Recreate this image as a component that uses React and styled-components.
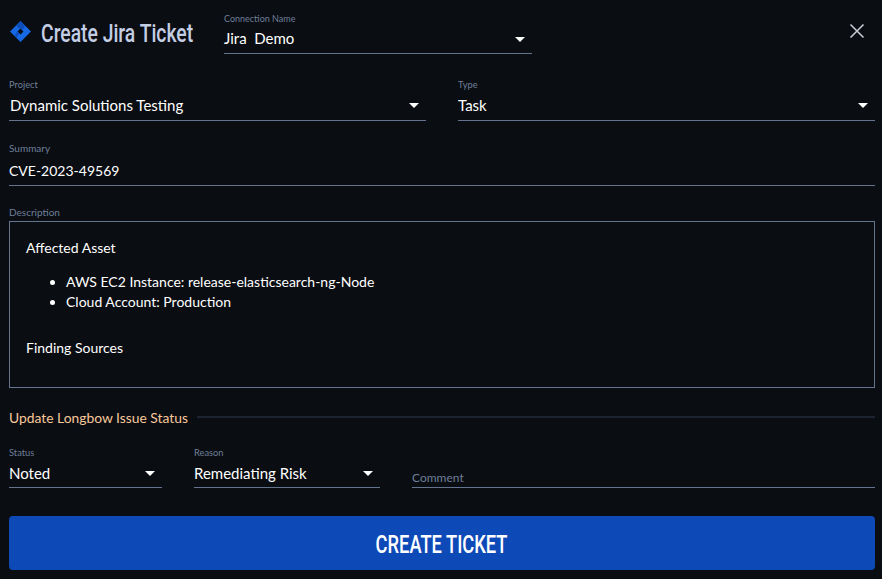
import React from "react";
import styled, { createGlobalStyle } from "styled-components";

const Global = createGlobalStyle`
  html, body { margin: 0; padding: 0; background: #0a0d12; }
  body { font-family: Lato, "Liberation Sans", sans-serif; color: #fff; }
  * { box-sizing: border-box; }
`;

const Page = styled.div`
  width: 882px;
  height: 579px;
  padding: 13px 7px 0 9px;
  background: #0a0d12;
  display: flex;
  flex-direction: column;
  overflow: hidden;
`;

const Header = styled.header`
  display: flex;
  align-items: flex-start;
  height: 41px;
`;

const TitleBlock = styled.div`
  display: flex;
  align-items: center;
  gap: 10px;
  width: 215px;
  height: 38px;
  padding-left: 1px;
`;

const LogoSlot = styled.span`
  flex: 0 0 21px;
  display: flex;
  margin-top: -2px;
`;

const Title = styled.h1`
  margin: 0;
  display: inline-block;
  font-family: Roboto, "Liberation Sans", sans-serif;
  font-size: 26.5px;
  font-weight: 500;
  color: #c3cde4;
  white-space: nowrap;
  transform: scaleX(0.73);
  transform-origin: left center;
`;

const CloseButton = styled.button`
  margin: 9px 9px 0 auto;
  padding: 0;
  width: 18px;
  height: 18px;
  display: flex;
  background: none;
  border: 0;
  color: #c6c9cf;
`;

const Row = styled.div`
  display: flex;
  gap: 32px;
  margin-top: ${(p) => p.$top || 0}px;
`;

const Field = styled.div`
  display: flex;
  flex-direction: column;
  flex: ${(p) => (p.$width ? `0 0 ${p.$width}px` : "1 1 0")};
  min-width: 0;
`;

const Label = styled.label`
  display: block;
  height: 12px;
  font-size: ${(p) => p.$size || 9.3}px;
  line-height: 12px;
  color: #6e7f99;
`;

const Control = styled.div`
  display: flex;
  align-items: center;
  justify-content: space-between;
  height: ${(p) => p.$height || 30}px;
  padding: ${(p) => p.$padTop || 0}px 7px ${(p) => p.$bottom ?? 2}px ${(p) => p.$left || 0}px;
  font-size: ${(p) => p.$font || 15}px;
  color: #fff;
  white-space: pre;
  border-bottom: 1px solid #64748f;
`;

const Placeholder = styled.span`
  font-size: 12px;
  color: #6e7f99;
  margin-top: 9px;
`;

const Caret = styled.span`
  width: 0;
  height: 0;
  margin-top: 2px;
  border-left: 5px solid transparent;
  border-right: 5px solid transparent;
  border-top: 5px solid #fff;
`;

const DescriptionBox = styled.div`
  height: 167px;
  margin-top: 3px;
  padding: 16px 16px 0;
  border: 1px solid #64748f;
  font-size: 14px;
  line-height: 20px;
  color: #fff;
`;

const Para = styled.p`
  margin: 0;
`;

const Bullets = styled.ul`
  margin: 14px 0 26px;
  padding-left: 40px;
`;

const SectionRow = styled.div`
  display: flex;
  align-items: center;
  gap: 9px;
  margin-top: 21px;
`;

const SectionTitle = styled.span`
  font-size: 13.85px;
  line-height: 18px;
  color: #f8c89b;
  white-space: nowrap;
`;

const SectionLine = styled.span`
  flex: 1;
  height: 2px;
  margin-top: -3px;
  background: #1d2431;
`;

const CreateButton = styled.button`
  margin-top: 28px;
  height: 54px;
  width: 100%;
  border: 0;
  border-radius: 4px;
  background: #0d4ab8;
  color: #fff;
`;

const ButtonLabel = styled.span`
  display: inline-block;
  font-family: Roboto, "Liberation Sans", sans-serif;
  font-size: 26.5px;
  font-weight: 500;
  transform: scaleX(0.69);
`;

const JiraLogo = () => (
  <svg width="21" height="21" viewBox="0 0 21 21" aria-hidden="true">
    <path fill="#1668e3" fillRule="evenodd" d="M10.5 0 L21 10.5 L10.5 21 L0 10.5 Z M10.5 7.5 L7.5 10.5 L10.5 13.5 L13.5 10.5 Z" />
    <path fill="#0c4db8" d="M10.5 0 L6 4.5 L9 7.5 L10.5 7.5 L12 9 L15.5 5 Z" />
    <path fill="#0c4db8" d="M4.5 15 L7.5 10.5 L9 12 L6.5 17 Z" />
  </svg>
);

const CloseIcon = () => (
  <svg width="18" height="18" viewBox="0 0 18 18" aria-hidden="true">
    <path d="M2.5 2.5 L15.5 15.5 M15.5 2.5 L2.5 15.5" stroke="currentColor" strokeWidth="1.6" fill="none" />
  </svg>
);

const SelectField = ({ label, value, width, height, labelSize, left, bottom }) => (
  <Field $width={width}>
    <Label $size={labelSize}>{label}</Label>
    <Control $height={height} $left={left} $bottom={bottom}>
      <span>{value}</span>
      <Caret />
    </Control>
  </Field>
);

export default function App() {
  return (
    <Page>
      <Global />
      <Header>
        <TitleBlock>
          <LogoSlot><JiraLogo /></LogoSlot>
          <Title>Create Jira Ticket</Title>
        </TitleBlock>
        <SelectField label="Connection Name" labelSize={9} value="Jira  Demo" width={308} height={29} />
        <CloseButton aria-label="Close"><CloseIcon /></CloseButton>
      </Header>
      <Row $top={25}>
        <SelectField label="Project" value="Dynamic Solutions Testing" left={1} height={30} />
        <SelectField label="Type" value="Task" height={30} />
      </Row>
      <Row $top={21}>
        <Field>
          <Label $size={10}>Summary</Label>
          <Control $height={32} $font={14} $bottom={0} $padTop={2}>CVE-2023-49569</Control>
        </Field>
      </Row>
      <Row $top={20}>
        <Field>
          <Label $size={10}>Description</Label>
          <DescriptionBox>
            <Para>Affected Asset</Para>
            <Bullets>
              <li>AWS EC2 Instance: release-elasticsearch-ng-Node</li>
              <li>Cloud Account: Production</li>
            </Bullets>
            <Para>Finding Sources</Para>
          </DescriptionBox>
        </Field>
      </Row>
      <SectionRow>
        <SectionTitle>Update Longbow Issue Status</SectionTitle>
        <SectionLine />
      </SectionRow>
      <Row $top={20}>
        <SelectField label="Status" value="Noted" width={153} height={29} bottom={1} />
        <SelectField label="Reason" value="Remediating Risk" width={186} height={29} bottom={1} />
        <Field>
          <Label />
          <Control $height={29} $bottom={1}><Placeholder>Comment</Placeholder></Control>
        </Field>
      </Row>
      <CreateButton><ButtonLabel>CREATE TICKET</ButtonLabel></CreateButton>
    </Page>
  );
}
